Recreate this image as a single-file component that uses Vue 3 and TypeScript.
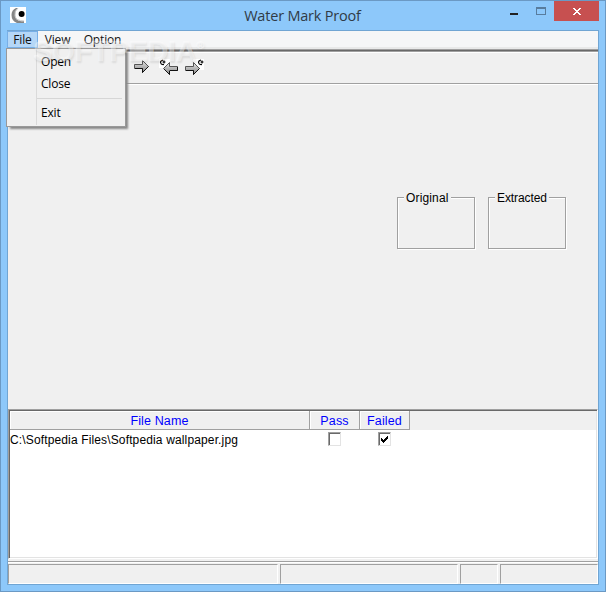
<script setup lang="ts">
import { ref } from 'vue'

interface FileRow { name: string; pass: boolean; failed: boolean }

const menus = ['File', 'View', 'Option']
const activeMenu = ref('File')
const groups = ['Original', 'Extracted']
const rows: FileRow[] = [{ name: 'C:\\Softpedia Files\\Softpedia wallpaper.jpg', pass: false, failed: true }]
</script>

<template>
  <div class="window">
    <header class="titlebar">
      <svg class="app-icon" width="16" height="16" viewBox="0 0 16 16">
        <rect width="16" height="16" fill="#fff" />
        <path d="M8 1H6Q1.500 3 1.500 8Q1.500 14 7 16H14V14Q5 15 5 8Q5 3 8 1Z" fill="#858585" />
        <path d="M8 1Q4 4 5 9Q6 14 14 14" fill="none" stroke="#c4c4c4" />
        <circle cx="11.6" cy="7" r="3" fill="#000" />
      </svg>
      <h1><span class="title-text">Water Mark Proof</span></h1>
      <div class="controls">
        <svg width="92" height="21" viewBox="0 0 92 21" shape-rendering="crispEdges">
          <rect x="3" y="12" width="8" height="2" fill="#222" />
          <rect x="29.5" y="6.5" width="9" height="7" fill="none" stroke="#587c9d" />
          <path d="M29 7.5H39" stroke="#587c9d" />
          <rect x="47" y="0" width="45" height="20" fill="#c75050" />
          <path d="M66 7h2v1h1v1h2v-1h1v-1h2v1h-1v1h-1v1h-1v1h1v1h1v1h1v1h-2v-1h-1v-1h-2v1h-1v1h-2v-1h1v-1h1v-1h1v-1h-1v-1h-1v-1h-1z" fill="#fff" />
        </svg>
      </div>
    </header>

    <main class="client">
      <nav class="menubar">
        <button v-for="m in menus" :key="m" :class="['menu-item', m.toLowerCase(), { active: m === activeMenu }]" @click="activeMenu = m"><span>{{ m }}</span></button>
      </nav>
      <div class="toolbar">
        <svg width="80" height="20" viewBox="0 0 80 20">
          <defs>
            <linearGradient id="metal" x1="0" y1="0" x2="0" y2="1">
              <stop offset="0" stop-color="#eee" /><stop offset=".5" stop-color="#b4b4b4" /><stop offset="1" stop-color="#888" />
            </linearGradient>
          </defs>
          <g shape-rendering="crispEdges" fill="#fff">
            <path d="M27 1H38V5L32 10H27Z" /><path d="M61 1H72V12H67L61 5Z" />
          </g>
          <g fill="url(#metal)" stroke-width="1">
            <path d="M2.5 6.500H10.500V2.500L16.500 8.500L10.500 14.500V10.500H2.500Z" stroke="#555" />
            <path d="M45.500 8.500H37.500V4.500L31.500 10.500L37.500 16.500V12.500H45.500Z" stroke="#555" />
            <path d="M53.500 8.500H61.500V4.500L67.500 10.500L61.500 16.500V12.500H53.500Z" stroke="#555" />
          </g>
          <path d="M3 10.500H10.500V14.500L16.500 8.500M45.500 9V12.500H38M37.500 13V16.500L32 11M54 12.500H61.500V16.500L67.500 10.500" fill="none" stroke="#111" />
          <g fill="none" stroke="#000" stroke-width="1.2">
            <path d="M31 2Q28.500 2.500 28.500 4.500Q29 7 32 6.500M30.500 4H33.500M32 2.500V5.500" />
            <path d="M69 2Q66.500 2.500 66.500 4.500Q67 7 70 6.500M68.500 4H71.500M70 2.500V5.500" />
          </g>
        </svg>
      </div>
      <section class="workspace">
        <div v-for="g in groups" :key="g" :class="['group', g.toLowerCase()]"><span>{{ g }}</span></div>
      </section>
      <section class="grid">
        <div class="grid-head">
          <div class="cell name">File Name</div>
          <div class="cell check">Pass</div>
          <div class="cell check">Failed</div>
        </div>
        <div v-for="r in rows" :key="r.name" class="grid-row">
          <div class="filename"><span>{{ r.name }}</span></div>
          <div v-for="(v, i) in [r.pass, r.failed]" :key="i" class="check-cell">
            <div class="box">
              <svg v-if="v" width="9" height="9" viewBox="0 0 9 9" shape-rendering="crispEdges">
                <path d="M1 3h1v1h1v1h1v-1h1v-1h1v-1h1v-1h1v3h-1v1h-1v1h-1v1h-1v1h-1v-1h-1v-1h-1z" />
              </svg>
            </div>
          </div>
        </div>
      </section>
      <footer class="statusbar">
        <div class="pane first"></div>
        <div class="pane second"></div>
        <div class="pane third"></div>
        <div class="pane fourth"></div>
      </footer>
    </main>

    <div v-if="activeMenu === 'File'" class="popup">
      <div class="entry">Open</div>
      <div class="entry">Close</div>
      <div class="divider"></div>
      <div class="entry">Exit</div>
    </div>
    <div class="watermark">SOFTPEDIA<sup>®</sup></div>
  </div>
</template>

<style>
body { margin: 0; overflow: hidden; }
</style>

<style scoped>
* { box-sizing: border-box; }
.window { position: relative; width: 606px; height: 592px; display: flex; flex-direction: column; padding: 0 6px 6px; border: 1px solid #6b99c4; background: #8dc8fa; font-family: "Open Sans", sans-serif; color: #000; }
.titlebar { height: 29px; display: flex; justify-content: space-between; padding-left: 3px; }
.app-icon { margin-top: 6px; }
h1 { margin: 4px 0 0; font-size: 15px; font-weight: 400; line-height: 20px; color: #303b46; white-space: nowrap; padding-left: 72px; }
.title-text { font-size: 14.5px; letter-spacing: -.2px; }
.controls { width: 92px; height: 21px; }
.client { height: 555px; display: flex; flex-direction: column; border: 1px solid #70a5d3; background: #f0f0f0; }
.menubar { height: 18px; flex: none; display: flex; background: #f5f6f7; border-bottom: 2px solid #e8e9e9; }
.menu-item { height: 17px; padding: 0; border: 1px solid transparent; background: transparent; font: 12px/14px "Open Sans", sans-serif; letter-spacing: -.15px; color: #111; }
.file { width: 31px; margin-left: -1px; }
.menu-item.active { background: #b5d7f7; border-color: #78afe6; }
.view { width: 39px; }
.option { width: 51px; }
.toolbar { height: 36px; flex: none; padding: 6px 0 0 124px; border-top: 1px solid #a0a0a0; border-bottom: 1px solid #fff; box-shadow: inset 0 1px #696969, inset 0 2px #a0a0a0, inset 0 3px #fff, inset 0 -1px #a0a0a0; }
.toolbar svg { display: block; margin-top: 2px; }
.workspace { height: 324px; flex: none; display: flex; gap: 13px; padding: 112px 0 0 389px; }
.group { width: 78px; height: 52px; border: 1px solid #a0a0a0; box-shadow: inset 1px 1px #fff, 1px 1px #fff; font: 12px/14px "Liberation Sans", sans-serif; }
.group span { display: block; width: max-content; margin: -7px 0 0 6px; padding: 0 2px; background: #f0f0f0; letter-spacing: .15px; }
.group.extracted span { letter-spacing: -.1px; }
.grid { height: 150px; flex: none; border: 1px solid; border-color: #a0a0a0 #fff #fff #a0a0a0; box-shadow: inset 1px 1px #696969, inset -1px -1px #e3e3e3; background: #fff; padding: 1px; font: 12px/19px "Liberation Sans", sans-serif; }
.grid-head { display: flex; height: 19px; color: #00f; background: #f0f0f0; font-size: 12.5px; letter-spacing: .12px; }
.cell { border-right: 1px solid #a0a0a0; border-bottom: 1px solid #a0a0a0; box-shadow: inset 1px 1px #fff; text-align: center; line-height: 20px; }
.cell.name { width: 300px; }
.cell.check { width: 50px; }
.grid-row { display: flex; height: 20px; }
.filename { width: 300px; line-height: 20px; white-space: nowrap; letter-spacing: .14px; }
.check-cell { width: 50px; padding: 2px 0 0 18px; }
.box { width: 13px; height: 14px; border: 1px solid; border-color: #a0a0a0 #e3e3e3 #e3e3e3 #a0a0a0; box-shadow: inset 1px 1px #696969; padding: 2px 1px 1px 1px; }
.box svg { display: block; }
.statusbar { height: 25px; flex: none; display: flex; gap: 2px; margin-top: 2px; padding-top: 2px; border-top: 1px solid #a0a0a0; box-shadow: inset 0 1px #fff; }
.pane { height: 20px; border: 1px solid; border-color: #a0a0a0 #fff #fff #a0a0a0; }
.first { width: 270px; }
.second { width: 178px; }
.third { width: 38px; }
.fourth { flex: 1; }
.popup { position: absolute; left: 5px; top: 47px; width: 120px; height: 79px; padding: 2px 3px; border: 1px solid #999; background: linear-gradient(90deg, transparent 29px, #dadada 29px, #dadada 30px, transparent 30px) 0 0 / 100% 76px no-repeat, #f0f0f0; box-shadow: 3px 3px 2px -1px #888; font: 12px/22px "Open Sans", sans-serif; letter-spacing: -.2px; }
.entry { height: 22px; padding-left: 31px; }
.divider { height: 7px; margin-left: 27px; border-top: 1px solid #d6d6d6; transform: translateY(3px); }
.watermark { position: absolute; left: 32px; top: 33px; font: bold 29px/34px "Liberation Sans", sans-serif; letter-spacing: -.3px; color: rgba(255, 255, 255, .4); -webkit-text-stroke: .5px rgba(255, 255, 255, .25); text-shadow: 1px 2px 2px rgba(0, 0, 0, .09); pointer-events: none; white-space: nowrap; }
.watermark sup { font-size: 11px; line-height: 0; vertical-align: 12px; }
</style>
